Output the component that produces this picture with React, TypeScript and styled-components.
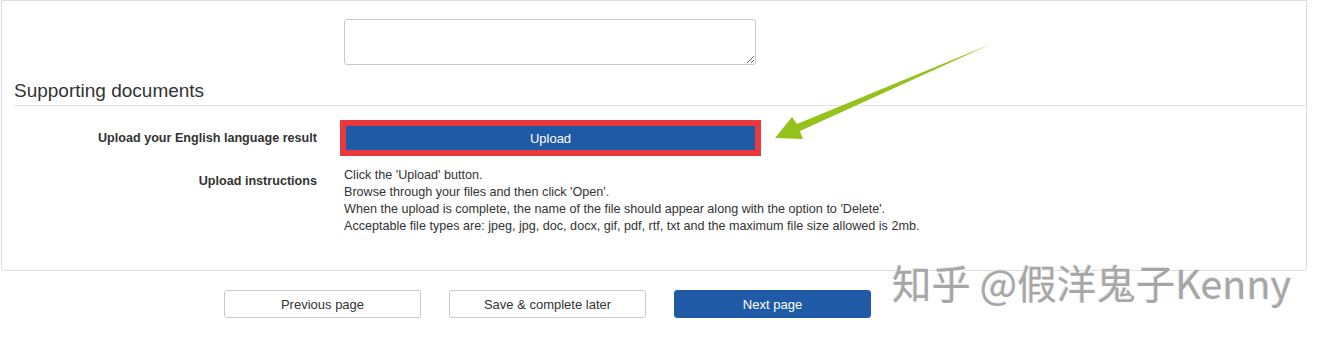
import React from "react";
import styled, { createGlobalStyle } from "styled-components";

const GlobalStyle = createGlobalStyle`
  html, body {
    margin: 0;
    padding: 0;
    background: #fff;
  }
  body {
    font-family: "Liberation Sans", Arial, sans-serif;
    color: #333;
  }
`;

const Page = styled.div`
  position: relative;
  width: 1320px;
  height: 341px;
  overflow: hidden;
  background: #fff;
`;

const Panel = styled.section`
  margin-left: 1px;
  width: 1306px;
  height: 271px;
  box-sizing: border-box;
  border: 1px solid #dcdcdc;
  border-radius: 0 0 4px 4px;
  padding-top: 18px;
`;

const FieldRow = styled.div<{ top?: number }>`
  display: grid;
  grid-template-columns: 315px 412px;
  column-gap: 27px;
  align-items: start;
  margin-top: ${(p) => p.top ?? 0}px;
`;

const Label = styled.label<{ pad?: number }>`
  text-align: right;
  font-size: 12.6px;
  font-weight: bold;
  color: #333;
  line-height: 17px;
  padding-top: ${(p) => p.pad ?? 0}px;
`;

const TextArea = styled.textarea`
  box-sizing: border-box;
  width: 412px;
  height: 46px;
  border: 1px solid #c8c8c8;
  border-radius: 3px;
  resize: vertical;
  font-family: inherit;
`;

const SectionTitle = styled.h2`
  margin: 16px 0 0 12px;
  padding-bottom: 4px;
  border-bottom: 1px solid #e2e2e2;
  font-size: 19px;
  font-weight: normal;
  line-height: 20px;
  color: #333;
`;

const Highlight = styled.div`
  margin-left: -4px;
  width: 421px;
  box-sizing: border-box;
  border: 6px solid #e8393f;
`;

const PrimaryButton = styled.button`
  display: block;
  width: 100%;
  height: 24px;
  border: 0;
  background: #1f5aa6;
  color: #fff;
  font-family: inherit;
  font-size: 13px;
  cursor: pointer;
`;

const Instructions = styled.div`
  font-size: 12.6px;
  line-height: 17px;
  color: #333;
  white-space: nowrap;
  padding-top: 1px;
`;

const Footer = styled.div`
  display: flex;
  gap: 28px;
  margin: 19px 0 0 224px;
`;

const NavButton = styled.button<{ primary?: boolean }>`
  width: 197px;
  height: 28px;
  box-sizing: border-box;
  border-radius: 3px;
  border: 1px solid ${(p) => (p.primary ? "#1f5aa6" : "#c9c9c9")};
  background: ${(p) => (p.primary ? "#1f5aa6" : "#fff")};
  color: ${(p) => (p.primary ? "#fff" : "#333")};
  font-family: inherit;
  font-size: 13px;
  cursor: pointer;
`;

const Arrow = styled.svg`
  position: absolute;
  left: 0;
  top: 0;
  pointer-events: none;
`;

const Watermark = styled.div`
  position: absolute;
  left: 892px;
  top: 256px;
  font-family: "Noto Sans CJK SC", "Noto Sans", sans-serif;
  font-size: 39.5px;
  line-height: 52px;
  color: #a6a6a6;
  white-space: nowrap;
  text-shadow: 1px 1px 0 #fff, -1px -1px 0 #e6e6e6;
`;

export default function App() {
  return (
    <Page>
      <GlobalStyle />
      <Panel>
        <FieldRow>
          <span />
          <TextArea />
        </FieldRow>
        <SectionTitle>Supporting documents</SectionTitle>
        <FieldRow top={14}>
          <Label pad={10}>Upload your English language result</Label>
          <Highlight>
            <PrimaryButton>Upload</PrimaryButton>
          </Highlight>
        </FieldRow>
        <FieldRow top={10}>
          <Label pad={7}>Upload instructions</Label>
          <Instructions>
            Click the 'Upload' button.
            <br />
            Browse through your files and then click 'Open'.
            <br />
            When the upload is complete, the name of the file should appear along with the option to 'Delete'.
            <br />
            Acceptable file types are: jpeg, jpg, doc, docx, gif, pdf, rtf, txt and the maximum file size allowed is 2mb.
          </Instructions>
        </FieldRow>
      </Panel>
      <Footer>
        <NavButton>Previous page</NavButton>
        <NavButton>Save &amp; complete later</NavButton>
        <NavButton primary>Next page</NavButton>
      </Footer>
      <Arrow width="1320" height="341" viewBox="0 0 1320 341">
        <polygon
          points="991,44 797,124 792,117 775,138 803,139 800,131"
          fill="#94c11c"
        />
      </Arrow>
      <Watermark>知乎 @假洋鬼子Kenny</Watermark>
    </Page>
  );
}
